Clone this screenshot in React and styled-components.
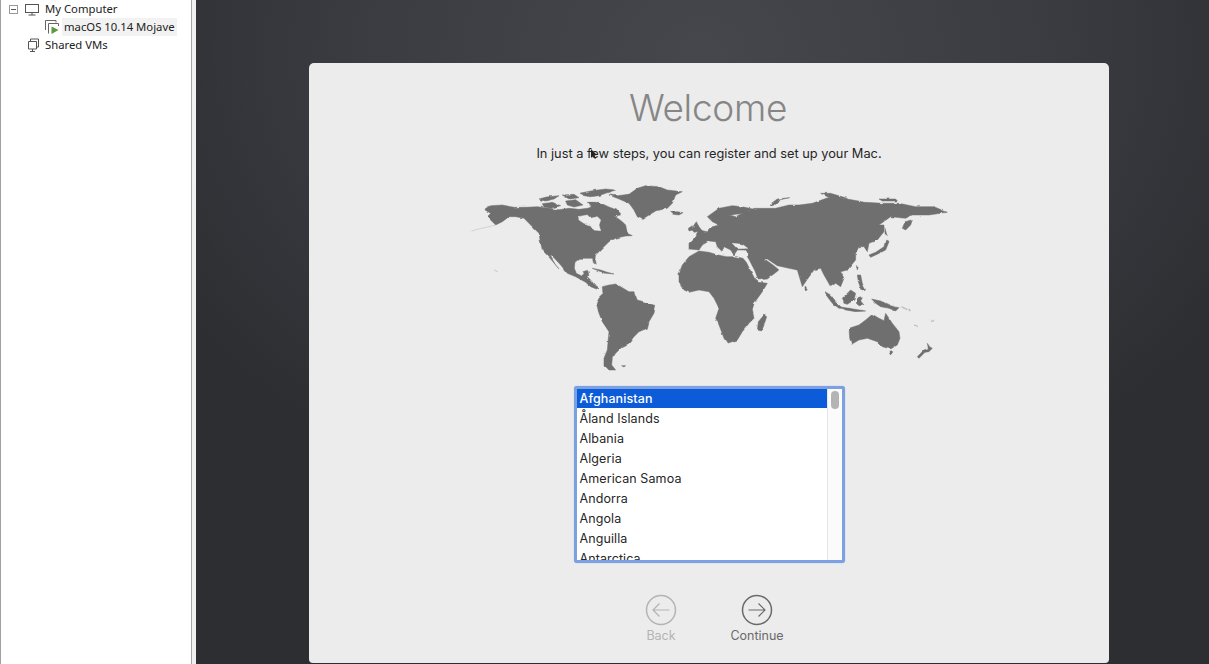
import React from 'react';
import styled, { createGlobalStyle } from 'styled-components';

const Global = createGlobalStyle`
  html, body { margin: 0; padding: 0; width: 1209px; height: 664px; overflow: hidden; background: #2f2f33; }
  #root { width: 1209px; height: 664px; }
`;
const Page = styled.div`display: flex; width: 1209px; height: 664px; overflow: hidden;`;
const Sidebar = styled.aside`
  width: 190px; flex: none; background: #fff; border-left: 1px solid #a0a0a0;
  font-family: "Noto Sans", "Open Sans", sans-serif; font-size: 11.3px; color: #222;
`;
const Splitter = styled.div`width: 5px; flex: none; background: #f0f0f0; border-left: 1px solid #a4a4a4; box-sizing: border-box;`;
const Row = styled.div`
  height: 18px; display: flex; align-items: center; position: relative;
  padding-left: ${p => p.$indent}px; box-sizing: border-box;
  white-space: nowrap;
`;
const RowLabel = styled.span`
  margin-left: ${p => p.$gap}px; line-height: 18px;
  padding: 0 ${p => (p.$selected ? 2 : 0)}px; background: ${p => (p.$selected ? '#f2f2f2' : 'transparent')};
`;
const Expander = styled.span`
  width: 9px; height: 9px; box-sizing: border-box; border: 1px solid #9a9a9a; margin-right: 6px;
  display: flex; align-items: center; justify-content: center; flex: none;
  &::after { content: ''; width: 5px; height: 1px; background: #555; }
`;
const Main = styled.main`
  flex: 1; min-width: 0; padding: 63px 0 0 113px; box-sizing: border-box;
  background: radial-gradient(ellipse 620px 480px at 50% 8%, #46474c 0%, #3b3c41 55%, #2d2e32 100%);
`;
const Card = styled.section`
  width: 800px; height: 600px; background: #ececec; border-radius: 5px 5px 4px 4px; position: relative;
  display: flex; flex-direction: column; align-items: center; font-family: Inter, "Liberation Sans", sans-serif; overflow: hidden;
`;
const Title = styled.h1`
  margin: 22px 2px 0 0; font-weight: 300; font-size: 37px; line-height: 46px; color: #868686; letter-spacing: -0.3px;
`;
const Subtitle = styled.p`
  margin: 14px 0 0; font-size: 12.8px; line-height: 18px; color: #262626;
`;
const WorldMap = styled.svg`display: block; width: 480px; height: 195px; margin-top: 17px; flex: none;`;
const ListBox = styled.div`
  margin-top: 11px; width: 271px; height: 177px; box-sizing: border-box; flex: none;
  border: 3px solid #7ba1e2; border-radius: 3px; background: #fff; display: flex; overflow: hidden;
  box-shadow: 0 0 1px #7ba1e2;
`;
const Items = styled.ul`
  list-style: none; margin: 0; padding: 0; flex: 1; min-width: 0; font-size: 12.5px; color: #262626; overflow: hidden;
`;
const Item = styled.li`
  height: 20px; line-height: 19px; padding-left: 3px; letter-spacing: 0.1px;
  ${p => p.$active && 'background: #0c5bd9; color: #fff; font-weight: 500; height: 19px; margin-bottom: 1px;'}
`;
const Track = styled.div`width: 14px; flex: none; background: #fbfbfb; border-left: 1px solid #e6e6e6; display: flex; justify-content: center; padding-top: 2px;`;
const Thumb = styled.div`width: 8px; height: 18px; border-radius: 4px; background: #b4b4b4;`;
const Nav = styled.nav`display: flex; gap: 42px; margin-top: 31px; width: 180px; justify-content: center;`;
const NavButton = styled.div`
  width: 54px; display: flex; flex-direction: column; align-items: center; font-size: 12.5px; line-height: 16px; font-weight: 400;
  color: ${p => (p.$disabled ? '#b4b4b4' : '#6a6a6a')};
  svg { display: block; margin-bottom: 2px; }
`;
const Pointer = styled.svg`position: absolute; left: 281px; top: 86px;`;

const BG = '#ececec';
const WEST = [
  'M80 100L95 92L130 90L165 97L200 97L235 95L270 100L300 104L330 100L360 103L385 100L410 92L440 112L470 125L490 140L500 150L505 175L520 182L500 183L470 190L450 200L440 210L425 225L410 240L408 250L412 268L405 262L400 250L380 250L362 250L348 262L346 280L352 295L368 303L380 290L388 290L385 305L395 315L405 328L420 338L412 342L395 335L380 322L350 305L325 295L305 270L282 245L274 243L290 270L300 282L275 252L250 225L243 195L240 175L215 150L195 130L170 125L150 125L130 140L110 150L100 140L85 125L95 115L78 105Z',
  'M240 72L262 66L300 62L285 72L258 78Z', 'M250 86L280 82L305 92L275 100L255 96Z', 'M310 60L345 58L360 68L330 72Z',
  'M320 78L350 74L372 90L345 96L325 90Z', 'M360 55L400 47L440 42L470 45L440 55L420 62L395 65L375 62Z',
  'M385 82L420 82L450 96L472 104L485 120L460 125L430 110L400 100Z',
  'M450 60L475 62L510 58L535 40L560 32L600 35L625 45L670 50L650 60L640 85L625 100L590 108L570 120L550 133L535 125L525 105L510 85L480 72Z',
  'M635 112L655 110L672 113L660 120L642 118Z',
  'M400 280L425 285L445 292L465 297L440 295L420 288Z', 'M372 290L385 286L390 302L380 300Z',
  'M430 335L450 330L470 327L490 338L510 350L525 350L535 375L560 382L590 392L585 415L570 440L565 460L540 470L525 485L510 505L490 515L470 535L460 550L458 570L470 585L450 585L435 570L435 550L445 525L448 490L450 470L430 440L420 415L412 385L420 370L432 358Z',
  'M488 572L500 572L495 576Z'
];
const WEST_CUT = 'M358 125L385 120L395 130L415 125L425 135L420 150L425 167L405 165L395 150L375 145L360 135Z';
const EAST = [
  'M-60 295L-50 270L-30 245L0 228L30 232L50 238L80 245L110 245L132 250L142 262L155 288L168 312L178 322L205 325L190 350L165 385L160 405L165 430L150 445L130 470L115 495L85 505L75 490L60 450L50 430L60 400L45 370L30 350L0 345L-30 352L-45 345L-60 320Z',
  'M-30 205L-15 190L0 165L25 170L40 155L60 150L90 120L110 125L130 115L150 110L165 100L230 100L270 90L300 90L340 85L395 65L445 72L500 82L550 85L600 85L650 95L705 95L745 112L690 120L640 120L620 130L575 125L540 150L555 150L555 170L535 195L510 205L505 230L495 215L480 215L470 235L470 255L445 285L425 290L435 310L425 335L410 325L395 335L375 300L365 280L345 285L320 320L310 335L295 285L270 280L235 272L205 252L197 252L225 272L240 285L205 312L178 315L168 288L152 257L145 245L148 235L140 225L115 225L105 240L95 225L75 215L70 230L55 215L50 200L30 198L10 210L0 225L-30 222Z',
  'M25 125L60 100L100 92L130 95L165 103L140 115L110 118L88 122L80 140L60 150L40 140Z',
  'M-20 165L-15 150L-8 140L0 155L10 168L-15 172Z', 'M-32 160L-20 152L-18 165L-30 168Z',
  'M210 90L235 72L272 68L240 75L222 92Z', 'M365 55L395 55L445 70L420 72L385 65Z', 'M540 72L590 72L595 78L550 78Z',
  'M610 160L618 140L640 135L635 150L620 165Z', 'M510 240L530 232L555 215L560 195L570 200L560 225L530 240L515 247Z', 'M558 160L565 185L558 175Z',
  'M475 300L485 300L490 325L500 345L485 340L478 320Z', 'M472 272L478 275L475 285Z',
  'M378 350L395 360L415 385L430 400L420 400L400 385L385 365Z', 'M420 395L450 400L500 408L470 410L440 405Z',
  'M430 370L455 345L470 355L465 375L445 388L435 385Z', 'M475 370L490 368L485 378L495 390L480 392L472 385Z',
  'M518 372L545 378L575 392L600 398L590 408L570 400L545 395L530 385Z',
  'M318 335L325 345L318 347Z', 'M195 420L203 425L195 450L188 468L175 465L178 440Z',
  'M450 460L480 450L500 435L520 418L540 430L555 437L560 415L580 445L600 470L603 490L595 510L575 522L550 515L535 500L505 490L480 495L458 508L452 490Z',
  'M570 532L582 530L575 540Z', 'M685 505L692 515L700 520L690 530L678 532L660 550L655 545L675 525L688 520Z'
];
const EAST_CUT = 'M100 205L130 208L146 220L115 221Z';

const NavCircle = ({ dir, color }) => (
  <svg width="32" height="32" viewBox="0 0 32 32" fill="none" stroke={color}>
    <circle cx="16" cy="16" r="14.5" strokeWidth="1.5" />
    <path d={dir === 'left' ? 'M24.500 16H8M14.500 9.500L8 16L14.500 22.500' : 'M7.500 16H24M17.500 9.500L24 16L17.500 22.500'} strokeWidth="1.2" />
  </svg>
);

const countries = ['Afghanistan', 'Åland Islands', 'Albania', 'Algeria', 'American Samoa', 'Andorra', 'Angola', 'Anguilla', 'Antarctica'];

export default function App() {
  return (
    <Page>
      <Global />
      <Sidebar>
        <Row $indent={8}>
          <Expander />
          <svg width="16" height="13" viewBox="0 0 16 13" fill="none" stroke="#555"><rect x="1.500" y="1.500" width="13" height="8" /><path d="M8 9.500V12M4.500 12H11.500" /></svg>
          <RowLabel $gap={5}>My Computer</RowLabel>
        </Row>
        <Row $indent={42}>
          <svg width="17" height="16" viewBox="0 0 17 16" fill="none" stroke="#666"><path d="M2.500 11V1.500H13V3.500M5.500 14.500V4.500H15.500V7" /><path d="M8.500 7.500L15.500 11L8.500 15Z" fill="#5a9a3a" stroke="none" /></svg>
          <RowLabel $gap={2} $selected>macOS 10.14 Mojave</RowLabel>
        </Row>
        <Row $indent={26}>
          <svg width="13" height="15" viewBox="0 0 13 15" fill="none" stroke="#555"><path d="M3.500 3V1H11.500V9H10" /><path d="M1.500 3.500H9.500V11H1.500ZM5.500 11V13.500M3 13.500H8" /></svg>
          <RowLabel $gap={5}>Shared VMs</RowLabel>
        </Row>
      </Sidebar>
      <Splitter />
      <Main>
        <Card>
          <Title>Welcome</Title>
          <Subtitle>In just a few steps, you can register and set up your Mac.</Subtitle>
          <WorldMap viewBox="470 180 480 195" fill="#6f6f6f" stroke="#6f6f6f" strokeLinejoin="round" strokeWidth="1.5">
            <defs>
              <filter id="coast" x="0" y="0" width="1" height="1" colorInterpolationFilters="sRGB" filterUnits="objectBoundingBox">
                <feTurbulence type="fractalNoise" baseFrequency="0.13" numOctaves="2" seed="4" result="n" />
                <feDisplacementMap in="SourceGraphic" in2="n" scale="2.500" xChannelSelector="R" yChannelSelector="G" />
                <feGaussianBlur stdDeviation="0.5" />
              </filter>
            </defs>
            <g filter="url(#coast)">
              <rect x="470" y="180" width="480" height="195" fill="none" stroke="none" />
              <g transform="translate(460 175) scale(0.3333)">
                {WEST.map((d, i) => <path key={i} d={d} />)}
                <path d={WEST_CUT} fill={BG} stroke={BG} />
                <path d="M35 168L110 150" stroke="#b9b9b9" strokeWidth="1.500" fill="none" />
                <path d="M105 285L122 293" stroke="#b9b9b9" strokeWidth="2" fill="none" />
              </g>
              <g transform="translate(700 175) scale(0.3333)">
                {EAST.map((d, i) => <path key={i} d={d} />)}
                <path d={EAST_CUT} fill={BG} stroke={BG} />
                <path d="M605 395L635 408M645 450L656 456M695 436L706 434" stroke="#bdbdbd" strokeWidth="4" fill="none" />
              </g>
            </g>
          </WorldMap>
          <ListBox>
            <Items>
              {countries.map((c, i) => <Item key={c} $active={i === 0}>{c}</Item>)}
            </Items>
            <Track><Thumb /></Track>
          </ListBox>
          <Nav>
            <NavButton $disabled><NavCircle dir="left" color="#b4b4b4" />Back</NavButton>
            <NavButton><NavCircle dir="right" color="#6a6a6a" />Continue</NavButton>
          </Nav>
          <Pointer width="8" height="11" viewBox="0 0 8 11"><path d="M1 0L1 9L3 7L5 10L6 9L4.500 6.500L7 6Z" fill="#222" /></Pointer>
        </Card>
      </Main>
    </Page>
  );
}
